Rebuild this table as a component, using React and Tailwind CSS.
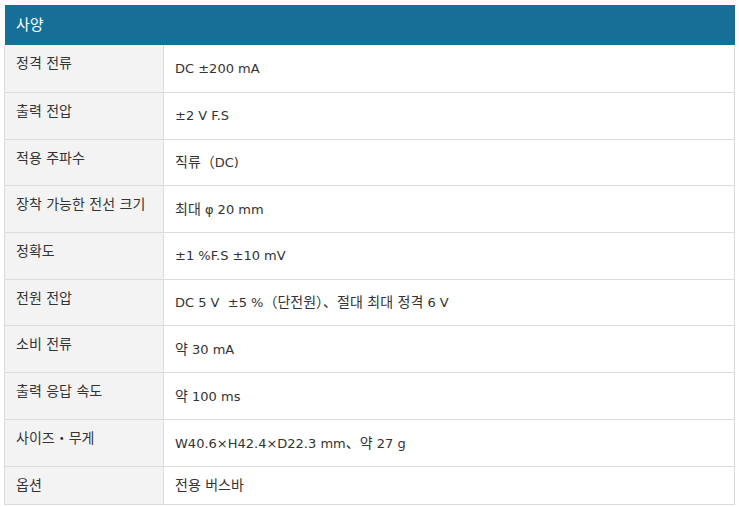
import React from "react";

const rows = [
  { label: "정격 전류", value: "DC ±200 mA", h: "h-[48px]" },
  { label: "출력 전압", value: "±2 V F.S", h: "h-[47px]" },
  { label: "적용 주파수", value: "직류（DC)", h: "h-[46px]" },
  { label: "장착 가능한 전선 크기", value: "최대 φ 20 mm", h: "h-[47px]" },
  { label: "정확도", value: "±1 %F.S ±10 mV", h: "h-[47px]" },
  { label: "전원 전압", value: "DC 5 V  ±5 %（단전원）、절대 최대 정격 6 V", h: "h-[46px]" },
  { label: "소비 전류", value: "약 30 mA", h: "h-[47px]" },
  { label: "출력 응답 속도", value: "약 100 ms", h: "h-[47px]" },
  { label: "사이즈・무게", value: "W40.6×H42.4×D22.3 mm、약 27 g", h: "h-[47px]" },
  { label: "옵션", value: "전용 버스바", h: "h-[38px]" },
];

function Mixed({ text }) {
  const parts = text.split(/([\uAC00-\uD7A3（）、・\s]*[\uAC00-\uD7A3（）、・]+)/);
  return parts.map((p, i) =>
    /[\uAC00-\uD7A3（）、・]/.test(p) ? (
      <span key={i} className="text-[14px]">
        {p}
      </span>
    ) : (
      <span key={i}>{p}</span>
    )
  );
}

export default function App() {
  return (
    <div
      className="w-[739px] h-[507px] bg-white pt-[5px] pl-[4px]"
      style={{ fontFamily: '"DejaVu Sans", "Noto Sans CJK KR", sans-serif' }}
    >
      <div className="w-[731px]">
        <div className="ml-[1px] h-[40px] bg-[#156f97] flex items-center pl-[11px] text-[15px] text-white">
          사양
        </div>
        <div className="border-l border-r border-[#dcdcdc]">
          {rows.map((r, i) => (
            <div key={i} className={`flex border-b border-[#dcdcdc] ${r.h}`}>
              <div className="w-[159px] shrink-0 bg-[#f3f3f3] border-r border-[#dcdcdc] pl-[11px] pt-[9px] text-[13px] leading-[18px] text-[#333333] whitespace-pre">
                <Mixed text={r.label} />
              </div>
              <div className="flex-1 flex items-center pl-[11px] text-[13px] leading-[18px] text-[#333333] whitespace-pre">
                <div>
                  <Mixed text={r.value} />
                </div>
              </div>
            </div>
          ))}
        </div>
      </div>
    </div>
  );
}
